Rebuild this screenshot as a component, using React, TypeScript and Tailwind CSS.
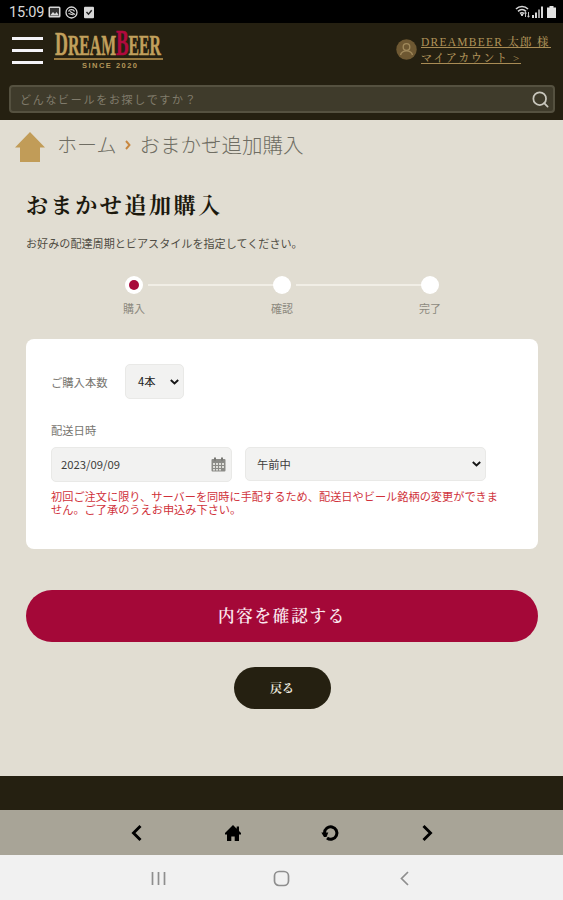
import React from "react";
import { Search } from "lucide-react";

const steps = [
    { label: "購入", active: true },
    { label: "確認", active: false },
    { label: "完了", active: false },
];

const sans = "font-['Noto_Sans_CJK_JP',sans-serif]";
const serif =
    "font-['Liberation_Serif','Noto_Serif_CJK_JP','Noto_Sans_CJK_JP',serif]";

const StatusBar: React.FC = () => (
    <div className="flex h-[23px] items-center justify-between bg-black pl-[9px] pr-[7px] text-[#d8d8d8]">
        <div className="flex items-center pt-px">
            <span className="w-[39px] pt-px font-[Roboto,sans-serif] text-[14.5px] leading-[22px] tracking-[-0.2px]">
                15:09
            </span>
            <svg className="h-[12px] w-[13px]" viewBox="0 0 13 12">
                <rect x="0.5" y="0.5" width="12" height="11" rx="1.5" fill="#d8d8d8" />
                <rect x="2" y="2" width="9" height="8" fill="#333" />
                <path d="M2 9.5 5 6l2 2 1.5-2L11 9.5Z" fill="#d8d8d8" />
            </svg>
            <svg className="ml-[4px] h-[13px] w-[13px]" viewBox="0 0 13 13" fill="none" stroke="#d8d8d8">
                <circle cx="6.5" cy="6.5" r="5.5" strokeWidth="1.3" />
                <path d="M3.500 5.500c1-2.500 5-2.500 6 0M3.500 7.500l5 1.500M5 5.500l5 3" strokeWidth="1.3" />
            </svg>
            <svg className="ml-[6px] h-[13px] w-[10px]" viewBox="0 0 10 13">
                <rect y="0.8" width="10" height="11.4" rx="1" fill="#d8d8d8" />
                <path d="m2.5 6 2 2.2 3.2-4" fill="none" stroke="#222" strokeWidth="1.4" />
            </svg>
        </div>
        <div className="flex items-center">
            <svg className="h-[13px] w-[16px]" viewBox="0 0 16 13" fill="none" stroke="#d8d8d8">
                <path d="M1 4c3.300-3.300 8.700-3.300 12 0M3 6.300c2.500-2.200 5.500-2.200 8 0M5 8.500c1.300-1 2.700-1 4 0" strokeWidth="1.6" />
                <path d="M6 9.500h2L7 11Z" fill="#d8d8d8" />
                <path d="M10.500 12V7.500M13.500 7v5M9.500 8.500l1-1.500 1 1.500M12.500 10.800l1 1.500 1-1.500" strokeWidth="0.9" />
            </svg>
            <svg className="ml-[1px] h-[12px] w-[12px]" viewBox="0 0 12 12" fill="#d8d8d8">
                <rect x="0" y="9" width="2" height="3" />
                <rect x="3" y="6.5" width="2" height="5.5" />
                <rect x="6" y="3.5" width="2" height="8.5" fill="#999" />
                <rect x="9" y="0.5" width="2" height="11.5" />
            </svg>
            <svg className="ml-[3px] h-[12px] w-[9px]" viewBox="0 0 9 12" fill="#e2e2e2">
                <path d="M2.500 0h4v1.500H9V12H0V1.500h2.500Z" />
            </svg>
        </div>
    </div>
);

const Logo: React.FC = () => (
    <svg className="h-[42px] w-[110px] overflow-visible" viewBox="0 0 110 42">
        <text
            x="1"
            y="25"
            fontSize="30"
            textLength="106"
            lengthAdjust="spacingAndGlyphs"
            className="font-['Liberation_Serif',serif] font-bold"
            fill="#c2a05c"
            stroke="#c2a05c"
            strokeWidth="0.5"
        >
            <tspan fontSize="34">D</tspan>
            REAM
            <tspan fontSize="36" fill="#b00a3e" stroke="#b00a3e">B</tspan>
            EER
        </text>
        <rect x="0" y="28" width="109" height="2" fill="#98793f" />
        <text
            x="28"
            y="38"
            fontSize="7.5"
            textLength="55"
            className="font-['Liberation_Sans',sans-serif] font-bold"
            fill="#b39559"
        >
            SINCE 2020
        </text>
    </svg>
);

const Header: React.FC = () => (
    <header className="h-[97px] bg-[#252011] px-[10px]">
        <div className="flex h-[62px] justify-between">
            <div className="flex">
                <button aria-label="メニュー" className="ml-[2px] mt-[14px] flex h-[27px] w-[31px] flex-col justify-between">
                    <span className="h-[3px] w-full bg-[#f4f3f8]" />
                    <span className="h-[3px] w-full bg-[#f4f3f8]" />
                    <span className="h-[3px] w-full bg-[#f4f3f8]" />
                </button>
                <div className="ml-[11px] mt-[7px]">
                    <Logo />
                </div>
            </div>
            <div className="mr-[2px] mt-[11px] flex">
                <svg className="mt-[5px] h-[21px] w-[21px]" viewBox="0 0 21 21">
                    <circle cx="10.5" cy="10.5" r="10.2" fill="#6e5832" />
                    <g fill="none" stroke="#a18a5c" strokeWidth="1.3">
                        <circle cx="10.5" cy="8" r="3.3" />
                        <path d="M4.500 16c1.500-5.500 10.500-5.500 12 0" />
                    </g>
                </svg>
                <div className={`ml-[4px] w-[130px] whitespace-nowrap text-[11.5px] font-medium leading-[17px] text-[#b09359] ${serif}`}>
                    <div className="h-[14px] w-[130px] border-b border-[#a98c55] tracking-[1.25px]">
                        DREAMBEER 太郎 様
                    </div>
                    <div className="mt-[2px] h-[14px] w-[100px] border-b border-[#a98c55] text-[11px] tracking-[1.6px]">
                        マイアカウント &gt;
                    </div>
                </div>
            </div>
        </div>
        <div className="-ml-px flex h-[28px] w-[546px] items-center justify-between rounded-[4px] border-2 border-[#555140] bg-[#3f3b2b] pl-[9px] pr-[3px]">
            <span className={`text-[11px] leading-[20px] tracking-[1.7px] text-[#817c6c] ${sans}`}>
                どんなビールをお探しですか？
            </span>
            <Search className="h-[19px] w-[19px] text-[#c9c7bd]" strokeWidth={2.2} />
        </div>
    </header>
);

const Stepper: React.FC = () => (
    <div className="mt-[24px] flex pl-[60px]">
        {steps.map((step, i) => (
            <div key={step.label} className="w-[148px] shrink-0">
                <div className="flex h-[18px] items-center pl-[39px]">
                    <span className="flex h-[18px] w-[18px] shrink-0 items-center justify-center rounded-full bg-white">
                        {step.active && <span className="h-[10px] w-[10px] rounded-full bg-[#a8093a]" />}
                    </span>
                    {i < steps.length - 1 && (
                        <span className="ml-[5px] -mr-[42px] h-[2px] flex-1 bg-[#f1eee6]" />
                    )}
                </div>
                <div className="mt-[6px] w-[96px] text-center text-[11px] leading-[16px] text-[#8c897e]">
                    {step.label}
                </div>
            </div>
        ))}
    </div>
);

const Chevron: React.FC = () => (
    <svg className="h-[6px] w-[9px]" viewBox="0 0 9 6" fill="none" stroke="#161616" strokeWidth="1.9">
        <path d="m0.800 1 3.700 3.500L8.200 1" />
    </svg>
);

const CalendarIcon: React.FC = () => (
    <svg className="h-[15px] w-[15px]" viewBox="0 0 15 15">
        <rect x="0.5" y="2" width="14" height="12.5" rx="1" fill="#8b8b87" />
        <rect x="3" y="0.5" width="2" height="3" fill="#777773" />
        <rect x="10" y="0.5" width="2" height="3" fill="#777773" />
        <path
            d="M2 6h2v2H2zM5 6h2v2H5zM8 6h2v2H8zM11 6h2v2h-2zM2 9h2v2H2zM5 9h2v2H5zM8 9h2v2H8zM11 9h2v2h-2zM2 12h2v1.500H2zM5 12h2v1.500H5zM8 12h2v1.500H8z"
            fill="#deded9"
        />
    </svg>
);

const OrderCard: React.FC = () => {
    const field =
        "flex items-center justify-between rounded-[5px] border border-[#e9e9e7] bg-[#f2f2f1]";

    return (
        <section className="mt-[23px] h-[210px] rounded-[8px] bg-white px-[25px] pt-[25px]">
            <div className="flex items-center">
                <span className="w-[74px] text-[11.3px] leading-[16px] text-[#77756f]">ご購入本数</span>
                <div className={`h-[35px] w-[59px] pl-[12px] pr-[4px] text-[11.3px] text-[#222] ${field}`}>
                    <span>4本</span>
                    <Chevron />
                </div>
            </div>
            <div className="mt-[23px] text-[11.3px] leading-[16px] text-[#77756f]">配送日時</div>
            <div className="mt-[9px] flex gap-[13px] text-[11.3px] text-[#3c3c3a]">
                <div className={`h-[35px] w-[181px] pl-[9px] pr-[5px] ${field}`}>
                    <span>2023/09/09</span>
                    <CalendarIcon />
                </div>
                <div className={`h-[34px] w-[241px] pl-[11px] pr-[4px] ${field}`}>
                    <span>午前中</span>
                    <Chevron />
                </div>
            </div>
            <p className="mt-[8px] whitespace-nowrap text-[11.2px] leading-[13px] text-[#d0323b]">
                初回ご注文に限り、サーバーを同時に手配するため、配送日やビール銘柄の変更ができま
                <br />
                せん。ご了承のうえお申込み下さい。
            </p>
        </section>
    );
};

const BrowserBar: React.FC = () => (
    <nav className="flex h-[45px] items-center justify-center gap-[77px] bg-[#a8a497] text-black">
        <svg className="h-[20px] w-[20px]" viewBox="0 0 20 20" fill="none" stroke="currentColor" strokeWidth="2.9">
            <path d="m14.500 3-7 7 7 7" />
        </svg>
        <svg className="h-[20px] w-[20px]" viewBox="0 0 20 20" fill="currentColor">
            <path d="M10 2 2 10v1.500h2V18h4.300v-4.500h3.400V18H16v-6.500h2V10l-2-2V3.500h-2.300v2.200Z" />
        </svg>
        <svg className="h-[20px] w-[20px]" viewBox="0 0 20 20">
            <path d="M4.500 10a6.200 6.200 0 1 1 2.500 5" fill="none" stroke="currentColor" strokeWidth="3" />
            <path d="M1.300 9.500h7l-1.800 4.500h-2.500Z" fill="currentColor" />
        </svg>
        <svg className="h-[20px] w-[20px]" viewBox="0 0 20 20" fill="none" stroke="currentColor" strokeWidth="2.9">
            <path d="m6.500 3 7 7-7 7" />
        </svg>
    </nav>
);

const SystemBar: React.FC = () => (
    <nav className="flex h-[45px] items-center justify-center gap-[103px] bg-[#f1f1f1] text-[#8e8e8e]">
        <svg className="h-[20px] w-[20px]" viewBox="0 0 20 20" fill="none" stroke="currentColor" strokeWidth="1.7">
            <path d="M3.500 4v13M9.500 4v13M15.500 4v13" />
        </svg>
        <svg className="h-[20px] w-[20px]" viewBox="0 0 20 20" fill="none" stroke="currentColor" strokeWidth="1.7">
            <rect x="2.5" y="3.5" width="14" height="14" rx="4.5" />
        </svg>
        <svg className="h-[20px] w-[20px]" viewBox="0 0 20 20" fill="none" stroke="currentColor" strokeWidth="1.7">
            <path d="m13 4-6.500 6.500L13 17" />
        </svg>
    </nav>
);

export default function App() {
    return (
        <div className={`h-[900px] w-[563px] overflow-hidden bg-[#e1ddd2] ${sans}`}>
            <StatusBar />
            <Header />
            <main className="h-[656px] pl-[26px] pr-[25px]">
                <div className="-ml-[12px] flex h-[50px] items-center whitespace-nowrap text-[20.5px] font-light leading-[30px] text-[#6f6d63]">
                    <svg className="mt-[4px] h-[31px] w-[32px]" viewBox="0 0 32 31">
                        <path d="M16 0 1 15.500h5V30h20V15.500h5Z" fill="#c19c58" />
                    </svg>
                    <span className="ml-[11px] text-[20px]">ホーム</span>
                    <svg className="ml-[9px] h-[10px] w-[6px]" viewBox="0 0 6 10">
                        <path d="m1 1 3.500 4L1 9" fill="none" stroke="#c8873f" strokeWidth="1.9" />
                    </svg>
                    <span className="mb-[2px] ml-[8px]">おまかせ追加購入</span>
                </div>
                <h1 className={`mt-[19px] text-[22px] font-bold leading-[34px] tracking-[2.6px] text-[#1c190e] ${serif}`}>
                    おまかせ追加購入
                </h1>
                <p className="mt-[12px] text-[11.1px] leading-[17px] text-[#4f4c43]">
                    お好みの配達周期とビアスタイルを指定してください。
                </p>
                <Stepper />
                <OrderCard />
                <button className={`mt-[41px] block h-[52px] w-full rounded-full bg-[#a40838] pt-[3px] text-[16.5px] font-semibold tracking-[1.8px] text-[#fbe9ef] ${serif}`}>
                    内容を確認する
                </button>
                <button className={`mx-auto mt-[25px] block h-[42px] w-[97px] rounded-full bg-[#252011] pt-px text-[12px] font-bold text-[#e8e5dc] ${serif}`}>
                    戻る
                </button>
            </main>
            <div className="h-[34px] bg-[#252011]" />
            <BrowserBar />
            <SystemBar />
        </div>
    );
}
